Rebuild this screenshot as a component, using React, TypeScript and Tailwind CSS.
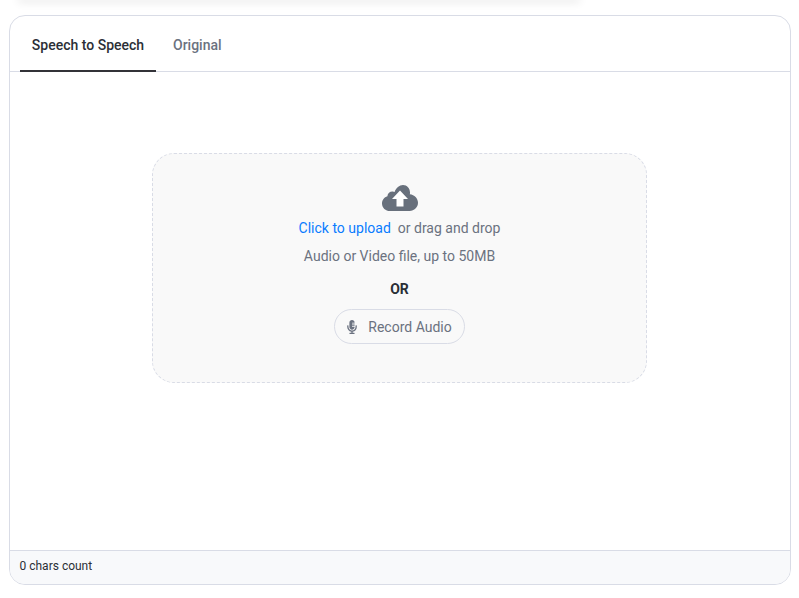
import { FaMicrophoneAlt } from "react-icons/fa";

function CloudUpload() {
  return (
    <svg width="36" height="26" viewBox="0 0 36 26" className="mt-[3px] mb-[2px]">
      <path
        fill="#68707c"
        d="M8 26C3.6 26 0 22.6 0 18.4C0 15 2.2 12.2 5.4 11.2C5.6 8.4 8 6.4 10.8 6.6C11.4 6.6 12 6.8 12.6 7C14 3 17.4 0 21 0C25 0 28 3.4 28 7.4C28 8 28 8.6 27.8 9.2C32.4 9.8 36 13.4 36 17.8C36 22.4 32.2 26 27.6 26Z"
      />
      <path fill="#ffffff" d="M18 5.5L26 14H21.5V21.5H14.5V14H10Z" />
    </svg>
  );
}

export default function App() {
  return (
    <div className="h-[598px] w-[799px] overflow-hidden bg-white font-['Roboto',sans-serif]">
      <div className="mx-5 h-0 w-[558px] shadow-[0_0_8px_2px_rgba(0,0,0,0.12)]" />

      <div className="mx-[9px] mt-[15px] flex h-[570px] w-[782px] flex-col overflow-hidden rounded-2xl border border-[#d9dce6] bg-white">
        <div className="flex h-[56px] shrink-0 border-b border-[#d9dce6] pl-[10px]">
          <button className="-mb-px h-[56px] w-[136px] border-b-2 border-[#333338] pt-[4px] text-sm font-medium text-[#2b2f36]">
            Speech to Speech
          </button>
          <button className="ml-[17px] h-[55px] pt-[2px] text-sm font-medium text-[#6b7280]">
            Original
          </button>
        </div>

        <div className="flex flex-1 justify-center pr-px pt-[81px]">
          <div className="flex h-[230px] w-[495px] flex-col items-center rounded-[22px] border border-dashed border-[#d9dce6] bg-[#f9f9f9] pt-[28px]">
            <CloudUpload />
            <p className="mt-[5px] text-sm leading-[20px] text-[#6b7280]">
              <span className="text-[#0a7cff]">Click to upload</span>
              <span className="ml-[7px]">or drag and drop</span>
            </p>
            <p className="mt-2 text-sm leading-[20px] text-[#6b7280]">
              Audio or Video file, up to 50MB
            </p>
            <p className="mt-[13px] text-sm font-bold leading-[20px] text-[#2b2f36]">
              OR
            </p>
            <button className="mt-[10px] flex h-[35px] w-[131px] items-center justify-center gap-[9px] rounded-full border border-[#d9dce6] pr-[2px] text-sm text-[#6b7280]">
              <FaMicrophoneAlt className="h-[14px] w-[14px]" />
              Record Audio
            </button>
          </div>
        </div>

        <div className="flex h-[34px] shrink-0 items-center border-t border-[#d9dce6] bg-[#f8f9fb] pb-[3px] pl-[9.5px] text-xs text-[#2b2f36]">
          0 chars count
        </div>
      </div>
    </div>
  );
}
